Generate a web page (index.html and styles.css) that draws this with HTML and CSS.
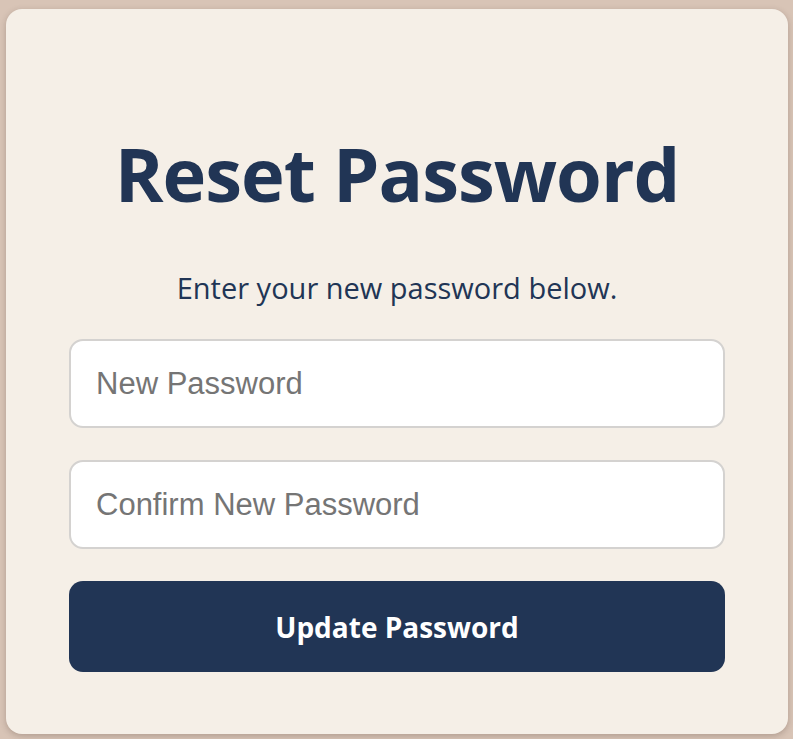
FILE: index.html
```html
<!DOCTYPE html>
<html lang="en">
<head>
<meta charset="utf-8">
<title>Reset Password</title>
<link rel="stylesheet" href="styles.css">
</head>
<body>
<main class="card">
  <h1 class="title">Reset Password</h1>
  <p class="subtitle">Enter your new password below.</p>
  <form class="form">
    <input class="field" type="password" placeholder="New Password">
    <input class="field" type="password" placeholder="Confirm New Password">
    <button class="submit" type="button">Update Password</button>
  </form>
</main>
</body>
</html>
```
FILE: styles.css
```css
* { box-sizing: border-box; }
html, body { margin: 0; padding: 0; }
body {
  background: #D8C4B6;
  height: 739px;
  overflow: hidden;
  padding: 9px 5px 0 6px;
}
.card {
  background: #F5EFE7;
  border-radius: 16px;
  height: 725px;
  box-shadow: 0 2px 6px rgba(60, 40, 30, 0.25);
  padding: 110px 63px 0;
  display: flex;
  flex-direction: column;
  align-items: stretch;
}
.title {
  margin: 0;
  text-align: center;
  font-family: "Open Sans", sans-serif;
  font-weight: 700;
  font-size: 74px;
  line-height: 110px;
  color: #213555;
  letter-spacing: -1px;
}
.subtitle {
  margin: 39px 0 0;
  text-align: center;
  font-family: "Open Sans", sans-serif;
  font-size: 29px;
  line-height: 40px;
  color: #213555;
}
.form {
  margin-top: 31px;
  display: flex;
  flex-direction: column;
  gap: 32px;
}
.field {
  height: 89px;
  border: 2px solid #d4d2d0;
  border-radius: 14px;
  background: #fff;
  padding: 0 25px;
  font-family: "Liberation Sans", Arial, sans-serif;
  font-size: 31px;
  color: #333;
  outline: none;
}
.field::placeholder { color: #757575; }
.submit {
  height: 91px;
  border: none;
  border-radius: 14px;
  background: #213555;
  color: #fff;
  font-family: "Open Sans", sans-serif;
  font-weight: 700;
  font-size: 28px;
  cursor: pointer;
}
```
